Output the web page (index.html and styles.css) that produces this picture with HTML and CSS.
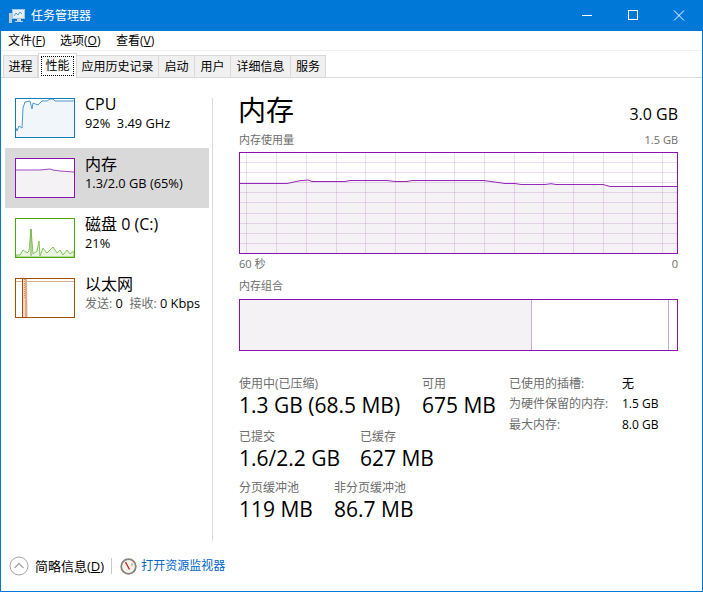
FILE: index.html
```html
<!DOCTYPE html>
<html lang="zh-CN">
<head>
<meta charset="utf-8">
<title>任务管理器</title>
<link rel="stylesheet" href="styles.css">
</head>
<body>
<div class="window">
  <header class="titlebar">
    <svg class="app-icon" width="16" height="16" viewBox="0 0 16 16">
      <rect x="0" y="5" width="3" height="10" fill="#b9ccd4"/>
      <rect x="3.5" y="1.5" width="12" height="9" fill="#e3f0f8" stroke="#a9c6d8"/>
      <path d="M5 8l2-3 2 2 2-3 2 2" fill="none" stroke="#5b9cc7"/>
      <path d="M8 11h4v2h2v1H6v-1h2z" fill="#c8d5dc"/>
    </svg>
    <span class="title-text">任务管理器</span>
    <div class="win-controls">
      <svg class="win-btn" viewBox="0 0 46 31"><path d="M18 15.5h10" stroke="#fff" fill="none"/></svg>
      <svg class="win-btn" viewBox="0 0 46 31"><rect x="18.5" y="10.5" width="9" height="9" stroke="#fff" fill="none"/></svg>
      <svg class="win-btn" viewBox="0 0 46 31"><path d="M18 10.5l10 10M28 10.5l-10 10" stroke="#fff" fill="none"/></svg>
    </div>
  </header>

  <nav class="menubar">
    <span class="menu-item">文件(<u>F</u>)</span>
    <span class="menu-item">选项(<u>O</u>)</span>
    <span class="menu-item">查看(<u>V</u>)</span>
  </nav>

  <div class="tabs">
    <span class="tab t1">进程</span>
    <span class="tab active t2"><span class="focus">性能</span></span>
    <span class="tab t3">应用历史记录</span>
    <span class="tab t4">启动</span>
    <span class="tab t5">用户</span>
    <span class="tab t6">详细信息</span>
    <span class="tab t7">服务</span>
  </div>

  <div class="content">
    <aside class="sidebar">
      <div class="side-item">
        <svg class="thumb" width="60" height="40" viewBox="0 0 60 40">
          <rect x="0.5" y="0.5" width="59" height="39" fill="#fff" stroke="#117dbb"/>
          <path d="M1 30L2 33 4 28 7 30 8 10 10 4 15 3 17 11 18 5 23 7 27 3 32 3 35 1 38 1 40 3 59 3V39H1Z" fill="#f1f6fa"/>
          <path d="M1 30L2 33 4 28 7 30 8 10 10 4 15 3 17 11 18 5 23 7 27 3 32 3 35 1 38 1 40 3 59 3" fill="none" stroke="#4a9ac9"/>
          <rect x="0.5" y="0.5" width="59" height="39" fill="none" stroke="#117dbb"/>
        </svg>
        <div class="side-text">
          <div class="side-name">CPU</div>
          <div class="side-sub">92%&nbsp; 3.49 GHz</div>
        </div>
      </div>
      <div class="side-item selected">
        <svg class="thumb" width="60" height="40" viewBox="0 0 60 40">
          <rect x="0.5" y="0.5" width="59" height="39" fill="#fff"/>
          <path d="M1 12H25L30 11.5 35 11 38 12 45 13 59 14V39H1Z" fill="#f4f2f4"/>
          <path d="M1 12H25L30 11.5 35 11 38 12 45 13 59 14" fill="none" stroke="#a04dbf"/>
          <rect x="0.5" y="0.5" width="59" height="39" fill="none" stroke="#8b12ae"/>
        </svg>
        <div class="side-text">
          <div class="side-name">内存</div>
          <div class="side-sub">1.3/2.0 GB (65%)</div>
        </div>
      </div>
      <div class="side-item">
        <svg class="thumb" width="60" height="40" viewBox="0 0 60 40">
          <rect x="0.5" y="0.5" width="59" height="39" fill="#fff"/>
          <path d="M1 37L5 37 8 32 12 35 14 33 16 11 18 36 22 33 24 23 25 38 28 30 32 35 38 29 42 35 45 32 48 37 52 32 55 36 59 33V39H1Z" fill="#eaf5e1" stroke="#86c05a"/>
          <path d="M16 11V38" stroke="#6cb33f" fill="none"/>
          <rect x="0.5" y="0.5" width="59" height="39" fill="none" stroke="#4da60c"/>
        </svg>
        <div class="side-text">
          <div class="side-name">磁盘 0 (C:)</div>
          <div class="side-sub">21%</div>
        </div>
      </div>
      <div class="side-item">
        <svg class="thumb" width="60" height="40" viewBox="0 0 60 40">
          <rect x="0.5" y="0.5" width="59" height="39" fill="#fff"/>
          <path d="M1 3.5H59" stroke="#dcae90" fill="none"/>
          <path d="M8 1L12 1 13 39H8Z" fill="#f1d9c9"/>
          <path d="M7.5 1V39" stroke="#a74f01" fill="none"/>
          <path d="M11 1V39" stroke="#c67d4a" fill="none"/>
          <path d="M9.5 1V20" stroke="#cf9468" stroke-dasharray="1 1" fill="none"/>
          <rect x="0.5" y="0.5" width="59" height="39" fill="none" stroke="#a74f01"/>
        </svg>
        <div class="side-text">
          <div class="side-name">以太网</div>
          <div class="side-sub"><span class="muted">发送:</span> 0&nbsp; <span class="muted">接收:</span> 0 Kbps</div>
        </div>
      </div>
    </aside>
    <div class="divider"></div>

    <main class="main">
      <div class="head">
        <h1 class="head-title">内存</h1>
        <span class="head-total">3.0 GB</span>
      </div>
      <div class="caption-row caption-top">
        <span>内存使用量</span><span>1.5 GB</span>
      </div>
      <svg class="usage" width="439" height="102" viewBox="0 0 439 102">
        <rect width="439" height="102" fill="#fff"/>
        <path d="M1 31.3H48L61 28.7 69 28 73 29.3H106L111 28.3H148L156 29.3H168L173 28.3H245L266 31.3H276L282 32.7H306L312 31.7 317 32.7H364L371 34.3H438V101H1Z" fill="#f4f2f4"/>
        <path d="M7.5 1V101M37.5 1V101M67.5 1V101M97.5 1V101M126.5 1V101M156.5 1V101M186.5 1V101M215.5 1V101M245.5 1V101M275.5 1V101M304.5 1V101M334.5 1V101M364.5 1V101M393.5 1V101M423.5 1V101M1 10.5H438M1 20.5H438M1 30.5H438M1 40.5H438M1 50.5H438M1 61.5H438M1 71.5H438M1 81.5H438M1 91.5H438" stroke="#8b12ae" stroke-opacity=".15" fill="none"/>
        <path d="M1 31.5H48L61 28.7 69 28 73 29.5H106L111 28.5H148L156 29.5H168L173 28.5H245L266 31.5H276L282 32.5H306L312 31.7 317 32.5H364L371 34.5H438" fill="none" stroke="#8b12ae" stroke-opacity=".9"/>
        <rect x="0.5" y="0.5" width="438" height="101" fill="none" stroke="#8b12ae"/>
      </svg>
      <div class="caption-row caption-time">
        <span>60 秒</span><span>0</span>
      </div>
      <div class="caption-row caption-comp"><span>内存组合</span></div>
      <div class="composition">
        <div class="comp-used"></div>
        <div class="comp-free"></div>
        <div class="comp-end"></div>
      </div>

      <div class="stats">
        <div class="stats-left">
          <div class="stat-row stat-row-first">
            <div class="stat w-183"><div class="stat-label">使用中(已压缩)</div><div class="stat-value">1.3 GB (68.5 MB)</div></div>
            <div class="stat"><div class="stat-label">可用</div><div class="stat-value">675 MB</div></div>
          </div>
          <div class="stat-row">
            <div class="stat w-121"><div class="stat-label">已提交</div><div class="stat-value">1.6/2.2 GB</div></div>
            <div class="stat"><div class="stat-label">已缓存</div><div class="stat-value">627 MB</div></div>
          </div>
          <div class="stat-row">
            <div class="stat w-95"><div class="stat-label">分页缓冲池</div><div class="stat-value">119 MB</div></div>
            <div class="stat"><div class="stat-label">非分页缓冲池</div><div class="stat-value">86.7 MB</div></div>
          </div>
        </div>
        <dl class="facts">
          <dt>已使用的插槽:</dt><dd>无</dd>
          <dt>为硬件保留的内存:</dt><dd>1.5 GB</dd>
          <dt>最大内存:</dt><dd>8.0 GB</dd>
        </dl>
      </div>
    </main>
  </div>

  <footer class="footer">
    <svg class="chevron" width="20" height="20" viewBox="0 0 20 20">
      <circle cx="10" cy="10" r="9" fill="#fff" stroke="#a6a6a6"/>
      <path d="M5.5 12L10 7.5 14.5 12" fill="none" stroke="#a6a6a6" stroke-width="1.3"/>
    </svg>
    <span class="fewer">简略信息(<u>D</u>)</span>
    <span class="foot-sep"></span>
    <svg class="monitor" width="17" height="17" viewBox="0 0 17 17">
      <circle cx="8.5" cy="8.5" r="7.3" fill="#f7f5f0" stroke="#8a827a" stroke-width="1.8"/>
      <path d="M5.5 4L9.5 11.5" stroke="#c3272b" stroke-width="1.4"/>
      <path d="M12 5v3" stroke="#b89a55"/>
    </svg>
    <a class="link">打开资源监视器</a>
  </footer>
</div>
</body>
</html>
```
FILE: styles.css
```css
* { box-sizing: border-box; }
html, body { margin: 0; padding: 0; background: #fff; }
body {
  width: 703px;
  height: 592px;
  overflow: hidden;
  font-family: "Open Sans", "Noto Sans CJK SC", sans-serif;
  font-size: 12px;
  color: #000;
}
.window {
  width: 703px;
  height: 592px;
  border: 1px solid #0078d7;
  border-top: 0;
  display: flex;
  flex-direction: column;
}
.titlebar {
  height: 31px;
  flex: none;
  background: #0078d7;
  color: #fff;
  display: flex;
  align-items: center;
  padding-left: 8px;
}
.app-icon { margin-right: 6px; }
.title-text { font-size: 12px; line-height: 16px; }
.win-controls { margin-left: auto; display: flex; }
.win-btn { width: 46px; height: 31px; display: block; }
.menubar {
  height: 20px;
  flex: none;
  display: flex;
  align-items: center;
  padding-left: 7px;
  gap: 8px;
  border-bottom: 1px solid #f0f0f0;
}
.menu-item { line-height: 16px; width: 44px; white-space: nowrap; }
.menu-item:nth-child(2) { width: 48px; }
.tabs {
  height: 27px;
  flex: none;
  display: flex;
  align-items: flex-end;
  padding-left: 2px;
  border-bottom: 1px solid #d9d9d9;
}
.tab {
  height: 22px;
  background: #f0f0f0;
  border: 1px solid #d9d9d9;
  border-left: 0;
  border-bottom: 0;
  display: flex;
  align-items: center;
  justify-content: center;
  flex: none;
  line-height: 16px;
  padding-top: 1px;
}
.t1 { width: 35px; border-left: 1px solid #d9d9d9; }
.t3 { width: 82px; }
.t4 { width: 36px; }
.t5 { width: 36px; }
.t6 { width: 60px; }
.t7 { width: 35px; }
.tab.active {
  width: 39px;
  height: 25px;
  margin-bottom: -1px;
  background: #fff;
  border-left: 1px solid #d9d9d9;
  padding: 2px;
}
.focus {
  border: 1px dotted #000;
  width: 100%;
  height: 100%;
  display: flex;
  align-items: center;
  justify-content: center;
}
.content { flex: 1; display: flex; min-height: 0; }
.sidebar { width: 211px; flex: none; padding: 10px 0 0 4px; }
.side-item {
  width: 204px;
  height: 60px;
  padding: 10px 0 0 10px;
  display: flex;
  gap: 10px;
}
.side-item.selected { background: #d9d9d9; }
.thumb { display: block; flex: none; }
.side-name { font-size: 16px; line-height: 20px; margin-top: -4px; white-space: nowrap; }
.side-sub { font-size: 12.8px; line-height: 16px; margin-top: 1px; white-space: nowrap; }
.muted { color: #6d6d6d; font-size: 12px; }
.divider { width: 1px; flex: none; background: #d9d9d9; margin: 20px 0 9px; }
.main { width: 439px; flex: none; margin-left: 26px; }
.head { display: flex; justify-content: space-between; align-items: flex-end; height: 50px; padding-top: 14px; }
.head-title { margin: 0; font-size: 28px; font-weight: 400; line-height: 36px; margin-left: -1px; }
.head-total { font-size: 16px; line-height: 22px; margin-bottom: 3px; }
.caption-row { display: flex; justify-content: space-between; font-size: 11px; line-height: 14px; color: #6d6d6d; }
.caption-top { height: 24px; padding-top: 5px; }
.usage { display: block; }
.caption-time { height: 19px; padding-top: 3px; }
.caption-comp { height: 26px; padding-top: 6px; }
.composition { height: 52px; display: flex; border: 1px solid #8b12ae; }
.comp-used { width: 292px; background: #f4f2f4; border-right: 1px solid #c9aad6; }
.comp-free { width: 137px; border-right: 1px solid #c9aad6; }
.comp-end { flex: 1; }
.stats { display: flex; padding-top: 25px; }
.stats-left { width: 270px; flex: none; }
.stat-row { display: flex; height: 51px; white-space: nowrap; }
.stat-row-first { height: 53px; }
.w-183 { width: 183px; flex: none; }
.w-121 { width: 121px; flex: none; }
.w-95 { width: 95px; flex: none; }
.stat-label { font-size: 12px; line-height: 16px; color: #6d6d6d; }
.stat-value { font-size: 21px; line-height: 28px; margin-top: -1px; }
.facts {
  margin: 0;
  display: grid;
  grid-template-columns: 113px auto;
  grid-template-rows: 20px 21px 20px;
  line-height: 16px;
  white-space: nowrap;
}
.facts dt { color: #6d6d6d; }
.facts dd { margin: 0; }
.footer {
  height: 41px;
  flex: none;
  display: flex;
  align-items: center;
  padding: 0 0 9px 8px;
}
.chevron { margin-right: 6px; flex: none; }
.fewer { font-size: 13px; line-height: 18px; }
.foot-sep { width: 1px; height: 16px; background: #c8c8c8; margin: 0 8px 0 7px; }
.monitor { margin-right: 4px; flex: none; }
.link { color: #0066cc; font-size: 12px; line-height: 16px; }
```
